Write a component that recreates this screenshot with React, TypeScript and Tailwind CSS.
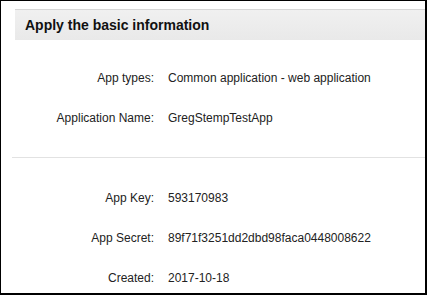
import React from 'react';

const top = [
  { label: 'App types:', value: 'Common application - web application' },
  { label: 'Application Name:', value: 'GregStempTestApp' },
];

const bottom = [
  { label: 'App Key:', value: '593170983' },
  { label: 'App Secret:', value: '89f71f3251dd2dbd98faca0448008622' },
  { label: 'Created:', value: '2017-10-18' },
];

function Row({ label, value }: { label: string; value: string }) {
  return (
    <div className="flex h-[40px] items-center text-[12px] text-[#222]">
      <div className="w-[153px] shrink-0 text-right">{label}</div>
      <div className="pl-[14px]">{value}</div>
    </div>
  );
}

export default function App() {
  return (
    <div
      className="h-[295px] w-[427px] overflow-hidden bg-white"
      style={{ fontFamily: '"Liberation Sans", Arial, sans-serif' }}
    >
      <div className="h-full w-full border-t border-l border-r-2 border-b-2 border-black pt-[8px]">
        <div className="ml-[14px] flex h-[31px] items-center border-t border-[#d6d6d6] bg-gradient-to-b from-[#f0f0f0] to-[#e9e9e9] pl-[10px]">
          <h1 className="text-[14px] font-bold text-[#111]">Apply the basic information</h1>
        </div>

        <div className="mt-[18px]">
          {top.map((r) => (
            <Row key={r.label} {...r} />
          ))}
        </div>

        <div className="ml-[11px] mt-[19px] h-px bg-[#e2e2e2]" />

        <div className="mt-[20px]">
          {bottom.map((r) => (
            <Row key={r.label} {...r} />
          ))}
        </div>
      </div>
    </div>
  );
}
